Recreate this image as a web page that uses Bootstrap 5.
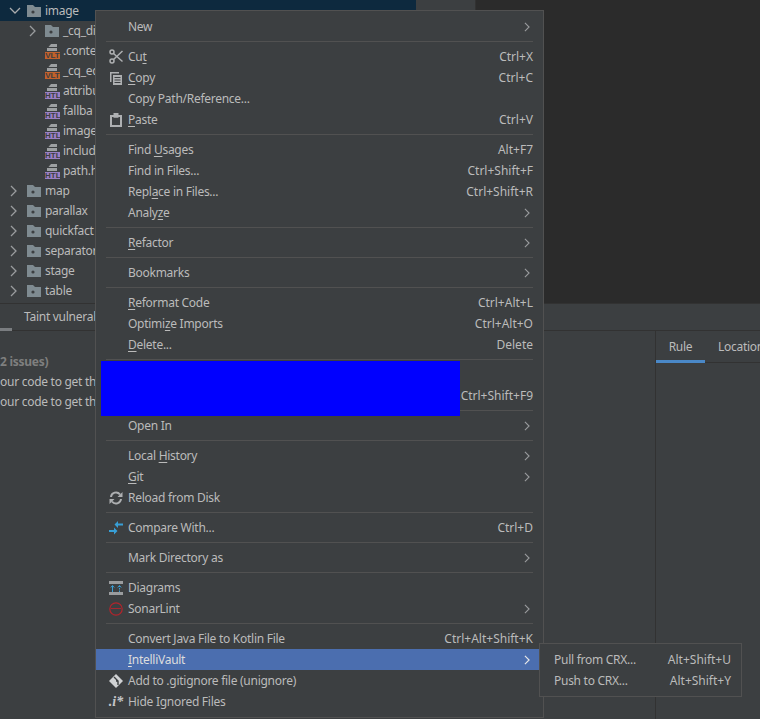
<!DOCTYPE html>
<html lang="en">
<head>
<meta charset="utf-8">
<title>IDE context menu</title>
<link href="https://cdn.jsdelivr.net/npm/bootstrap@5.3.0/dist/css/bootstrap.min.css" rel="stylesheet">
<style>
html,body{height:719px;overflow:hidden}
body{background:#3c3f41;color:#bbb;font:12px/20px "Noto Sans",sans-serif;letter-spacing:-.27px;position:relative;width:760px}
.top-area{height:303px}
.tree-pane{width:476px;border-right:1px solid #323232;overflow:hidden;flex:none}
.editor-pane{background:#2b2b2b}
.tree-row{height:20px;white-space:nowrap}
.tree-sel{background:#0d293e;width:416px;height:21px;padding-left:9px}
.lvl1{padding-left:29px}.lvl2{padding-left:45px}.lvl0{padding-left:10px}
.chev-sel{margin-right:6px;flex:none}
.chev-sub{margin-right:9px;flex:none}
.chev-top{margin-right:10px;flex:none}
.tree-ico{margin-right:4px;flex:none}
.file-ico{width:15px;height:16px;position:relative;margin-right:3px;flex:none;margin-top:1px}
.file-tag{display:block;position:absolute;left:0;right:0;bottom:1px;height:7px;font:bold 8px/7px "Liberation Sans",sans-serif;letter-spacing:0;text-align:center;color:#3c3f41}
.tag-vlt{background:#c2612b}.tag-htl{background:#9a7fc4}
.file-ico svg{position:absolute;left:2px;top:0}
.tool-strip{height:28px;border-top:1px solid #323232;border-bottom:1px solid #323232}
.tool-tab{padding-left:24px;line-height:26px;position:relative;width:96px;white-space:nowrap}
.tab-mark{position:absolute;left:0;bottom:-1px;width:12px;height:3px;background:#7a7d80}
.lower-area{height:388px}
.issues-pane{width:656px;flex:none;border-right:1px solid #323232;padding-top:21px;overflow:hidden;white-space:nowrap}
.issue-head{color:#7f7f7f;font-weight:700;height:20px}
.issue-line{height:20px}
.rule-tabs{height:32px;border-bottom:1px solid #323232;line-height:31px}
.rule-tab{width:49px;flex:none;text-align:center;position:relative}
.rule-tab.on::after{content:"";position:absolute;left:0;right:0;bottom:-1px;height:3px;background:#4a88c7}
.rule-other{margin-left:13px;white-space:nowrap}
.ide-menu{--bs-dropdown-bg:#3c3f41;--bs-dropdown-border-color:#515151;--bs-dropdown-border-radius:0;--bs-dropdown-padding-y:0;--bs-dropdown-min-width:0;--bs-dropdown-font-size:12px;--bs-dropdown-color:#bbb;position:absolute;padding:5px 0 0}
.main-menu{left:95px;top:10px;width:449px;height:708px}
.sub-menu{left:539px;top:643px;width:203px;height:54px;z-index:1010}
.ide-menu li{list-style:none}
.ide-item{--bs-dropdown-item-padding-x:0;--bs-dropdown-item-padding-y:0;color:#bbb;height:21px;line-height:20px;padding:0 10px 0 12px;display:flex;align-items:center;white-space:nowrap}
.ide-item:hover{color:#bbb;background:transparent}
.ide-item.hot,.ide-item.hot:hover{background:#4b6eaf;color:#ddd}
.ico-slot{width:16px;height:16px;margin-right:4px;flex:none;display:flex;align-items:center;justify-content:center}
.ide-sep{border-top:1px solid #515151;opacity:1;margin:4px 10px 4px 10px;height:0}
.keys{margin-left:auto;letter-spacing:0}
.sub-arrow{margin-left:auto;margin-right:3px;flex:none}
.redact{position:absolute;left:101px;top:361px;width:359px;height:55px;background:#00f;z-index:1005}
.sub-menu .ide-item{padding:0 10px 0 14px}
.dot-i{font:italic bold 14px/16px "Liberation Serif",serif;color:#c4c6c8;letter-spacing:0}
u{text-underline-offset:2px}
</style>
</head>
<body>
<svg width="0" height="0" class="d-none">
<symbol id="folder" viewBox="0 0 14 12"><path fill="#7f8b91" d="M0 0h6l2 2h6v10H0z"/><circle cx="6" cy="7" r="1.6" fill="#3c3f41"/></symbol>
<symbol id="page" viewBox="0 0 11 8"><path fill="#9da0a2" d="M4 0h6v3H1.500z"/><path fill="#9da0a2" d="M0 4h10v3H0z"/></symbol>
<symbol id="ch-r" viewBox="0 0 7 12"><path fill="none" stroke="#9a9c9e" stroke-width="1.300" d="M1 1l5 5-5 5"/></symbol>
<symbol id="ch-r-w" viewBox="0 0 7 12"><path fill="none" stroke="#e8e8e8" stroke-width="1.400" d="M1 1l5 5-5 5"/></symbol>
<symbol id="ch-d" viewBox="0 0 12 7"><path fill="none" stroke="#a9abad" stroke-width="1.300" d="M1 1l5 5 5-5"/></symbol>
</svg>

<div class="d-flex top-area">
  <div class="tree-pane">
    <div class="tree-sel d-flex align-items-center"><svg class="chev-sel" width="12" height="7"><use href="#ch-d"/></svg><svg class="tree-ico" width="14" height="12"><use href="#folder"/></svg><span>image</span></div>
    <div class="tree-row d-flex align-items-center lvl1"><svg class="chev-sub" width="7" height="12"><use href="#ch-r"/></svg><svg class="tree-ico" width="14" height="12"><use href="#folder"/></svg><span>_cq_di</span></div>
    <div class="tree-row d-flex align-items-center lvl2"><span class="file-ico"><svg width="11" height="8"><use href="#page"/></svg><span class="file-tag tag-vlt">VLT</span></span><span>.conte</span></div>
    <div class="tree-row d-flex align-items-center lvl2"><span class="file-ico"><svg width="11" height="8"><use href="#page"/></svg><span class="file-tag tag-vlt">VLT</span></span><span>_cq_ed</span></div>
    <div class="tree-row d-flex align-items-center lvl2"><span class="file-ico"><svg width="11" height="8"><use href="#page"/></svg><span class="file-tag tag-htl">HTL</span></span><span>attribu</span></div>
    <div class="tree-row d-flex align-items-center lvl2"><span class="file-ico"><svg width="11" height="8"><use href="#page"/></svg><span class="file-tag tag-htl">HTL</span></span><span>fallba</span></div>
    <div class="tree-row d-flex align-items-center lvl2"><span class="file-ico"><svg width="11" height="8"><use href="#page"/></svg><span class="file-tag tag-htl">HTL</span></span><span>image</span></div>
    <div class="tree-row d-flex align-items-center lvl2"><span class="file-ico"><svg width="11" height="8"><use href="#page"/></svg><span class="file-tag tag-htl">HTL</span></span><span>includ</span></div>
    <div class="tree-row d-flex align-items-center lvl2"><span class="file-ico"><svg width="11" height="8"><use href="#page"/></svg><span class="file-tag tag-htl">HTL</span></span><span>path.h</span></div>
    <div class="tree-row d-flex align-items-center lvl0"><svg class="chev-top" width="7" height="12"><use href="#ch-r"/></svg><svg class="tree-ico" width="14" height="12"><use href="#folder"/></svg><span>map</span></div>
    <div class="tree-row d-flex align-items-center lvl0"><svg class="chev-top" width="7" height="12"><use href="#ch-r"/></svg><svg class="tree-ico" width="14" height="12"><use href="#folder"/></svg><span>parallax</span></div>
    <div class="tree-row d-flex align-items-center lvl0"><svg class="chev-top" width="7" height="12"><use href="#ch-r"/></svg><svg class="tree-ico" width="14" height="12"><use href="#folder"/></svg><span>quickfact</span></div>
    <div class="tree-row d-flex align-items-center lvl0"><svg class="chev-top" width="7" height="12"><use href="#ch-r"/></svg><svg class="tree-ico" width="14" height="12"><use href="#folder"/></svg><span>separator</span></div>
    <div class="tree-row d-flex align-items-center lvl0"><svg class="chev-top" width="7" height="12"><use href="#ch-r"/></svg><svg class="tree-ico" width="14" height="12"><use href="#folder"/></svg><span>stage</span></div>
    <div class="tree-row d-flex align-items-center lvl0"><svg class="chev-top" width="7" height="12"><use href="#ch-r"/></svg><svg class="tree-ico" width="14" height="12"><use href="#folder"/></svg><span>table</span></div>
  </div>
  <div class="editor-pane flex-grow-1"></div>
</div>
<div class="tool-strip"><div class="tool-tab">Taint vulnerab<span class="tab-mark"></span></div></div>
<div class="d-flex lower-area">
  <div class="issues-pane">
    <div class="issue-head">2 issues)</div>
    <div class="issue-line">our code to get this</div>
    <div class="issue-line">our code to get this</div>
  </div>
  <div class="flex-grow-1 overflow-hidden">
    <div class="rule-tabs d-flex"><div class="rule-tab on">Rule</div><div class="rule-other">Location</div></div>
  </div>
</div>

<ul class="dropdown-menu show ide-menu main-menu">
  <li><div class="dropdown-item ide-item"><span class="ico-slot"></span><span>New</span><svg class="sub-arrow" width="6" height="10"><use href="#ch-r"/></svg></div></li>
  <li><hr class="ide-sep"></li>
  <li><div class="dropdown-item ide-item"><span class="ico-slot"><svg width="15" height="15" viewBox="0 0 15 15" fill="none" stroke="#aeb0b2" stroke-width="1.500"><circle cx="3" cy="3" r="2"/><circle cx="3" cy="12" r="2"/><path d="M4.500 4.500l9 8M4.500 10.500l9-8.500"/></svg></span><span>Cu<u>t</u></span><span class="keys">Ctrl+X</span></div></li>
  <li><div class="dropdown-item ide-item"><span class="ico-slot"><svg width="14" height="14" viewBox="0 0 14 14"><path fill="#aeb0b2" d="M1 1h9v1.500H2.500V11H1z"/><path fill="#aeb0b2" d="M4 4h9v10H4z"/><path stroke="#3c3f41" d="M5.500 6.500h6M5.500 9h6M5.500 11.500h6"/></svg></span><span><u>C</u>opy</span><span class="keys">Ctrl+C</span></div></li>
  <li><div class="dropdown-item ide-item"><span class="ico-slot"></span><span>Copy Path/Reference...</span></div></li>
  <li><div class="dropdown-item ide-item"><span class="ico-slot"><svg width="12" height="14" viewBox="0 0 12 14"><path fill="#aeb0b2" d="M0 2h3.500V0h5v2H12v12H0zM2 4v8h8V4H8.500v.8h-5V4z"/></svg></span><span><u>P</u>aste</span><span class="keys">Ctrl+V</span></div></li>
  <li><hr class="ide-sep"></li>
  <li><div class="dropdown-item ide-item"><span class="ico-slot"></span><span>Find <u>U</u>sages</span><span class="keys">Alt+F7</span></div></li>
  <li><div class="dropdown-item ide-item"><span class="ico-slot"></span><span>Find in Files...</span><span class="keys">Ctrl+Shift+F</span></div></li>
  <li><div class="dropdown-item ide-item"><span class="ico-slot"></span><span>Repl<u>a</u>ce in Files...</span><span class="keys">Ctrl+Shift+R</span></div></li>
  <li><div class="dropdown-item ide-item"><span class="ico-slot"></span><span>Analy<u>z</u>e</span><svg class="sub-arrow" width="6" height="10"><use href="#ch-r"/></svg></div></li>
  <li><hr class="ide-sep"></li>
  <li><div class="dropdown-item ide-item"><span class="ico-slot"></span><span><u>R</u>efactor</span><svg class="sub-arrow" width="6" height="10"><use href="#ch-r"/></svg></div></li>
  <li><hr class="ide-sep"></li>
  <li><div class="dropdown-item ide-item"><span class="ico-slot"></span><span>Bookmarks</span><svg class="sub-arrow" width="6" height="10"><use href="#ch-r"/></svg></div></li>
  <li><hr class="ide-sep"></li>
  <li><div class="dropdown-item ide-item"><span class="ico-slot"></span><span><u>R</u>eformat Code</span><span class="keys">Ctrl+Alt+L</span></div></li>
  <li><div class="dropdown-item ide-item"><span class="ico-slot"></span><span>Optimi<u>z</u>e Imports</span><span class="keys">Ctrl+Alt+O</span></div></li>
  <li><div class="dropdown-item ide-item"><span class="ico-slot"></span><span><u>D</u>elete...</span><span class="keys">Delete</span></div></li>
  <li><hr class="ide-sep"></li>
  <li><div class="dropdown-item ide-item"></div></li>
  <li><div class="dropdown-item ide-item"><span class="keys">Ctrl+Shift+F9</span></div></li>
  <li><hr class="ide-sep"></li>
  <li><div class="dropdown-item ide-item"><span class="ico-slot"></span><span>Open In</span><svg class="sub-arrow" width="6" height="10"><use href="#ch-r"/></svg></div></li>
  <li><hr class="ide-sep"></li>
  <li><div class="dropdown-item ide-item"><span class="ico-slot"></span><span>Local <u>H</u>istory</span><svg class="sub-arrow" width="6" height="10"><use href="#ch-r"/></svg></div></li>
  <li><div class="dropdown-item ide-item"><span class="ico-slot"></span><span><u>G</u>it</span><svg class="sub-arrow" width="6" height="10"><use href="#ch-r"/></svg></div></li>
  <li><div class="dropdown-item ide-item"><span class="ico-slot"><svg width="14" height="14" viewBox="0 0 14 14" fill="none" stroke="#aeb0b2" stroke-width="2"><path d="M2 6a5 5 0 0 1 9-2.500M12 8a5 5 0 0 1-9 2.500"/><path fill="#aeb0b2" stroke="none" d="M13.500 1v5h-5zM.5 13V8h5z"/></svg></span><span>Reload from Disk</span></div></li>
  <li><hr class="ide-sep"></li>
  <li><div class="dropdown-item ide-item"><span class="ico-slot"><svg width="14" height="14" viewBox="0 0 14 14"><path fill="#389fd6" d="M14 2.500H9V0L5.500 3.500 9 7V4.500h5zM0 9h5V6.500L8.500 10 5 13.500V11H0z"/></svg></span><span>Compare With...</span><span class="keys">Ctrl+D</span></div></li>
  <li><hr class="ide-sep"></li>
  <li><div class="dropdown-item ide-item"><span class="ico-slot"></span><span>Mark Directory as</span><svg class="sub-arrow" width="6" height="10"><use href="#ch-r"/></svg></div></li>
  <li><hr class="ide-sep"></li>
  <li><div class="dropdown-item ide-item"><span class="ico-slot"><svg width="14" height="14" viewBox="0 0 14 14"><path fill="#9a9c9e" d="M0 0h14v3H0zM0 11h14v3H0z"/><path fill="none" stroke="#389fd6" d="M3.500 11V5M1.800 6.500l1.700-2 1.700 2"/><path fill="none" stroke="#389fd6" stroke-dasharray="1.500 1" d="M10.500 11V5"/><path fill="none" stroke="#389fd6" d="M8.800 6.500l1.700-2 1.700 2"/></svg></span><span>Diagrams</span></div></li>
  <li><div class="dropdown-item ide-item"><span class="ico-slot"><svg width="14" height="14" viewBox="0 0 14 14" fill="none" stroke="#b3242c" stroke-width="1.200"><circle cx="7" cy="7" r="6.200"/><path stroke-width=".9" d="M2 7l1-1 1 1 1-1 1 1 1-1 1 1 1-1 1 1 1-1 1 1"/></svg></span><span>SonarLint</span><svg class="sub-arrow" width="6" height="10"><use href="#ch-r"/></svg></div></li>
  <li><hr class="ide-sep"></li>
  <li><div class="dropdown-item ide-item"><span class="ico-slot"></span><span>Convert Java File to Kotlin File</span><span class="keys">Ctrl+Alt+Shift+K</span></div></li>
  <li><div class="dropdown-item ide-item hot"><span class="ico-slot"></span><span><u>I</u>ntelliVault</span><svg class="sub-arrow" width="6" height="10"><use href="#ch-r-w"/></svg></div></li>
  <li><div class="dropdown-item ide-item"><span class="ico-slot"><svg width="14" height="14" viewBox="0 0 14 14"><path fill="#d0d2d4" d="M7 0l7 7-7 7-7-7z"/><path fill="none" stroke="#3c3f41" stroke-width="1.400" d="M5 3l4 4v4M9 7H7"/></svg></span><span>Add to .gitignore file (unignore)</span></div></li>
  <li><div class="dropdown-item ide-item"><span class="ico-slot dot-i">.i*</span><span>Hide Ignored Files</span></div></li>
</ul>
<div class="redact"></div>
<ul class="dropdown-menu show ide-menu sub-menu">
  <li><div class="dropdown-item ide-item"><span>Pull from CRX...</span><span class="keys">Alt+Shift+U</span></div></li>
  <li><div class="dropdown-item ide-item"><span>Push to CRX...</span><span class="keys">Alt+Shift+Y</span></div></li>
</ul>
</body>
</html>
